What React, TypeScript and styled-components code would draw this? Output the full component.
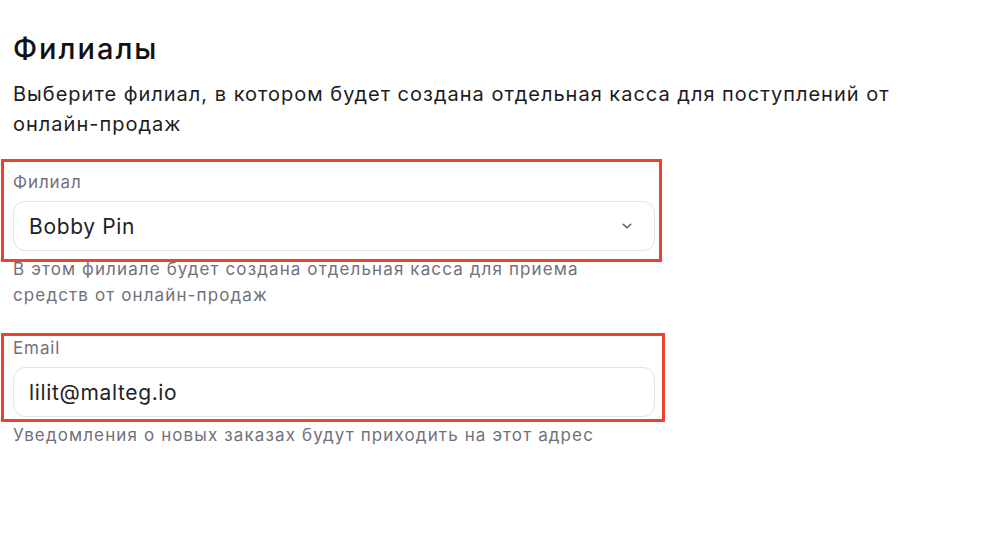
import React from "react";
import styled, { createGlobalStyle } from "styled-components";

const GlobalStyle = createGlobalStyle`
  html, body {
    margin: 0;
    padding: 0;
    background: #ffffff;
  }
  body {
    font-family: Inter, "Noto Sans", "Liberation Sans", sans-serif;
    -webkit-font-smoothing: antialiased;
  }
`;

const Page = styled.main`
  padding: 32px 0 0 13px;
  width: 1000px;
  height: 540px;
  box-sizing: border-box;
`;

const Title = styled.h1`
  margin: 0;
  font-size: 29px;
  line-height: 34px;
  font-weight: 500;
  color: #111114;
  letter-spacing: 2px;
`;

const Lead = styled.p`
  margin: 13px 0 0;
  width: 900px;
  font-size: 20px;
  line-height: 30px;
  font-weight: 400;
  color: #1d1d22;
  letter-spacing: 1px;
`;

const Form = styled.form`
  margin-top: 31px;
  width: 642px;
  display: flex;
  flex-direction: column;
  gap: 28px;
`;

const Field = styled.div`
  display: flex;
  flex-direction: column;
  gap: 6px;
`;

const Group = styled.div`
  position: relative;
  display: flex;
  flex-direction: column;
  gap: 7px;
`;

const Annotation = styled.span<{ $t: number; $r: number; $b: number; $l: number }>`
  position: absolute;
  top: ${(p) => -p.$t}px;
  right: ${(p) => -p.$r}px;
  bottom: ${(p) => -p.$b}px;
  left: ${(p) => -p.$l}px;
  border: 3px solid #ea432f;
  pointer-events: none;
`;

const Label = styled.label`
  font-size: 17px;
  line-height: 24px;
  color: #71717a;
  letter-spacing: 0.9px;
`;

const Control = styled.div`
  height: 50px;
  box-sizing: border-box;
  border: 1px solid #e3e3ea;
  border-radius: 12px;
  background: #ffffff;
  display: flex;
  align-items: center;
  padding: 0 22px 0 15px;
  font-size: 21px;
  letter-spacing: 0.65px;
  color: #222226;
`;

const Value = styled.span`
  flex: 1;
`;

const Chevron = styled.svg`
  width: 10px;
  height: 6px;
  color: #5c5c64;
`;

const Hint = styled.p`
  margin: 0;
  max-width: 600px;
  font-size: 17px;
  line-height: 25.6px;
  letter-spacing: 1.12px;
  color: #71717a;
`;

export default function App() {
  return (
    <>
      <GlobalStyle />
      <Page>
        <Title>Филиалы</Title>
        <Lead>
          Выберите филиал, в котором будет создана отдельная касса для поступлений от онлайн-продаж
        </Lead>
        <Form>
          <Field>
            <Group>
              <Label>Филиал</Label>
              <Control>
                <Value>Bobby Pin</Value>
                <Chevron viewBox="0 0 10 6" fill="none">
                  <polyline
                    points="1.2,1.2 5,4.8 8.8,1.2"
                    stroke="currentColor"
                    strokeWidth="1.5"
                    strokeLinecap="round"
                    strokeLinejoin="round"
                  />
                </Chevron>
              </Control>
              <Annotation $t={11} $r={7} $b={11} $l={12} />
            </Group>
            <Hint>В этом филиале будет создана отдельная касса для приема средств от онлайн-продаж</Hint>
          </Field>
          <Field>
            <Group>
              <Label>Email</Label>
              <Control>
                <Value>lilit@malteg.io</Value>
              </Control>
              <Annotation $t={3} $r={10} $b={5} $l={12} />
            </Group>
            <Hint>Уведомления о новых заказах будут приходить на этот адрес</Hint>
          </Field>
        </Form>
      </Page>
    </>
  );
}
